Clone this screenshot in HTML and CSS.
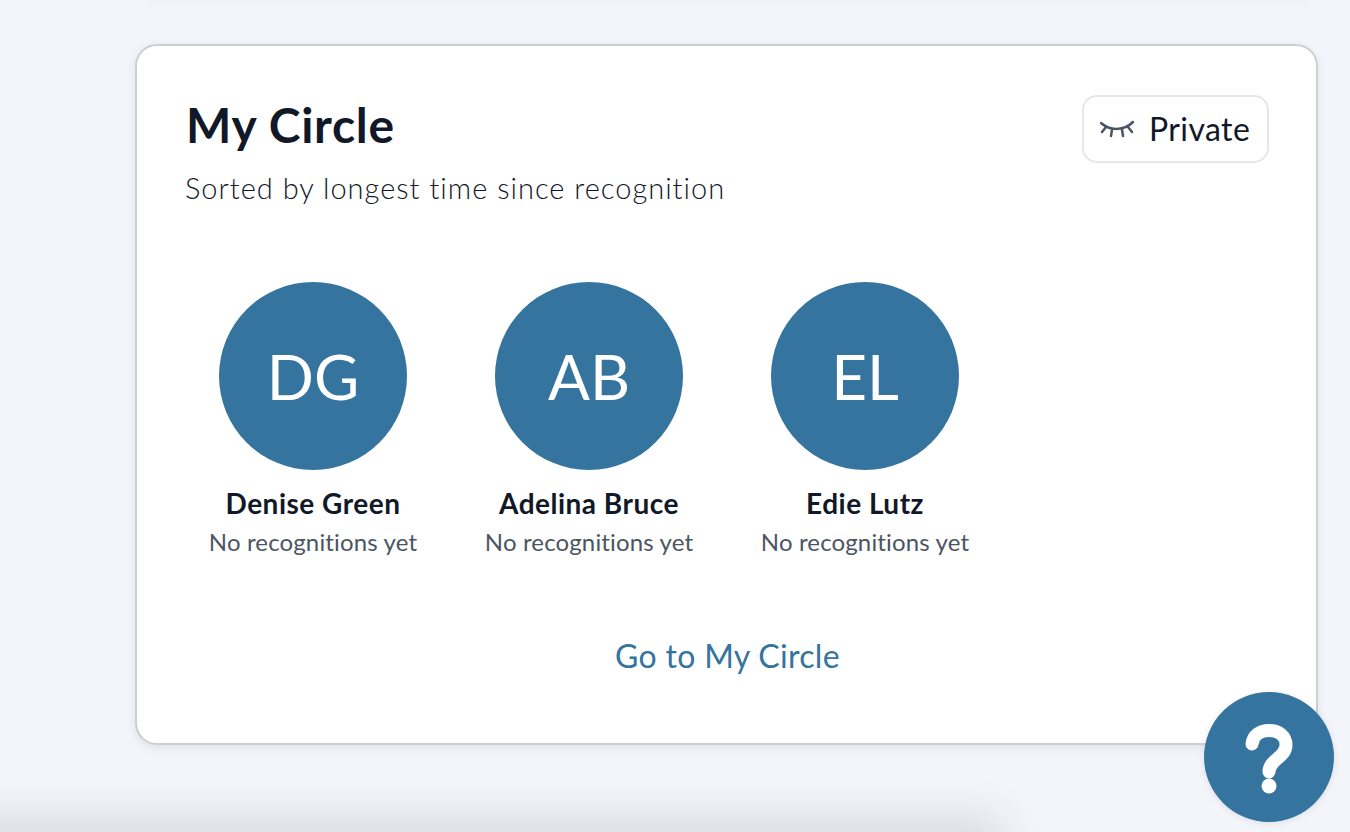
FILE: index.html
```html
<!DOCTYPE html>
<html lang="en">
<head>
<meta charset="utf-8">
<title>My Circle</title>
<link rel="stylesheet" href="styles.css">
</head>
<body>
<div class="prev-card"></div>
<main class="page">
  <section class="card">
    <header class="card-head">
      <div class="head-text">
        <h1 class="title">My Circle</h1>
        <p class="subtitle">Sorted by longest time since recognition</p>
      </div>
      <button class="private-btn" type="button">
        <svg class="eye" width="34" height="18" viewBox="0 0 34 18" fill="none" stroke="#4b5563" stroke-width="2.500" stroke-linecap="round">
          <path d="M1 3C10 11 24 11 33 2"/>
          <path d="M6 7L2 12M12 9.500L11 16M22 9.500L23 16M28 7L32 12"/>
        </svg>
        <span>Private</span>
      </button>
    </header>
    <div class="people">
      <article class="person">
        <div class="avatar">DG</div>
        <div class="name">Denise Green</div>
        <div class="meta">No recognitions yet</div>
      </article>
      <article class="person">
        <div class="avatar">AB</div>
        <div class="name">Adelina Bruce</div>
        <div class="meta">No recognitions yet</div>
      </article>
      <article class="person">
        <div class="avatar">EL</div>
        <div class="name">Edie Lutz</div>
        <div class="meta">No recognitions yet</div>
      </article>
    </div>
    <a class="go-link" href="#">Go to My Circle</a>
  </section>
</main>
<div class="bottom-shade"></div>
<button class="help" type="button" aria-label="Help">
  <svg width="130" height="130" viewBox="0 0 130 130" fill="none">
    <path d="M48 52C49 43 56 38.500 65 38.500C75 38.500 82 44 82 53C82 66 65 67 65 80" stroke="#fff" stroke-width="13" stroke-linecap="round"/>
    <circle cx="65" cy="94" r="7.500" fill="#fff"/>
  </svg>
</button>
</body>
</html>
```
FILE: styles.css
```css
* {
  box-sizing: border-box;
}

html,
body {
  height: 100%;
  margin: 0;
  overflow: hidden;
}

body {
  background: #f4f5fb;
  font-family: Lato, "Open Sans", sans-serif;
  font-variant-ligatures: none;
  color: #111827;
}

.prev-card {
  width: 1156px;
  height: 1px;
  margin: -1px 0 0 150px;
  box-shadow: 0 1px 5px rgba(60, 60, 80, 0.14);
}

.page {
  padding: 44px 32px 0 135px;
}

.card {
  width: 1183px;
  height: 701px;
  padding: 49px 47px 0 49px;
  background: #fff;
  border: 2px solid #cfcfd3;
  border-radius: 22px;
  box-shadow: 0 3px 8px rgba(60, 60, 80, 0.1);
}

.card-head {
  display: flex;
  justify-content: space-between;
  align-items: flex-start;
}

.title {
  margin: 0;
  font-size: 48px;
  line-height: 60px;
  font-weight: 700;
  letter-spacing: 0.7px;
}

.subtitle {
  margin: 13px 0 0 -1px;
  font-size: 29px;
  line-height: 40px;
  font-weight: 300;
  letter-spacing: 1px;
}

.private-btn {
  display: flex;
  align-items: center;
  gap: 15px;
  width: 187px;
  height: 68px;
  padding: 0 0 0 16px;
  background: #fff;
  border: 2px solid #e5e7eb;
  border-radius: 15px;
  font: 400 32px/1 Lato, "Open Sans", sans-serif;
  letter-spacing: 0.4px;
  color: #111827;
}

.people {
  display: flex;
  gap: 22px;
  margin-top: 74px;
}

.person {
  width: 254px;
  text-align: center;
}

.avatar {
  display: flex;
  align-items: center;
  justify-content: center;
  width: 188px;
  height: 188px;
  margin: 0 auto;
  border-radius: 50%;
  background: #34749e;
  color: #fff;
  font-size: 62px;
}

.name {
  margin-top: 15px;
  font-size: 28px;
  line-height: 36px;
  font-weight: 700;
  letter-spacing: 0.5px;
}

.meta {
  margin-top: 3px;
  font-size: 24px;
  line-height: 36px;
  letter-spacing: 0.15px;
  color: #4b5563;
}

.go-link {
  display: block;
  margin-top: 76px;
  font-size: 32px;
  line-height: 40px;
  letter-spacing: 0.3px;
  text-align: center;
  color: #34749e;
  text-decoration: none;
}

.bottom-shade {
  position: fixed;
  left: -120px;
  bottom: -30px;
  width: 1110px;
  height: 30px;
  box-shadow: 0 0 45px 12px rgba(40, 40, 50, 0.14);
}

.help {
  position: fixed;
  left: 1204px;
  top: 692px;
  width: 130px;
  height: 130px;
  padding: 0;
  border: 0;
  border-radius: 50%;
  background: #34749e;
  box-shadow: 0 1px 6px rgba(60, 60, 80, 0.12);
}

.help svg {
  display: block;
}
```
